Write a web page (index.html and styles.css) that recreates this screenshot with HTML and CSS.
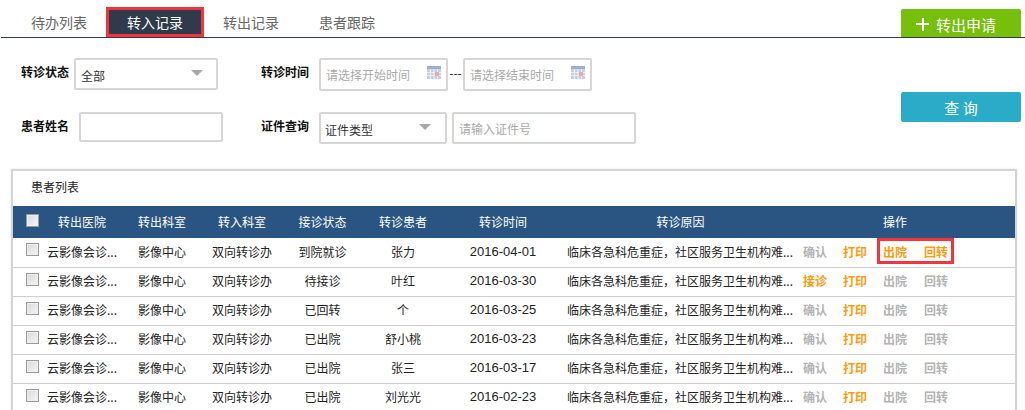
FILE: index.html
```html
<!DOCTYPE html>
<html lang="zh">
<head>
<meta charset="utf-8">
<title>转入记录</title>
<link rel="stylesheet" href="styles.css">
</head>
<body>
<div class="topbar">
  <div class="tabs">
    <a class="tab">待办列表</a>
    <a class="tab active">转入记录</a>
    <a class="tab">转出记录</a>
    <a class="tab">患者跟踪</a>
  </div>
  <button class="btn-add"><span class="plus"></span>转出申请</button>
</div>
<div class="filters">
  <div class="form">
    <div class="row row-one">
      <label class="lbl">转诊状态</label>
      <div class="field sel w-status"><span>全部</span><i class="arrow"></i></div>
      <label class="lbl lbl-two">转诊时间</label>
      <div class="field date"><span class="ph">请选择开始时间</span>
        <svg class="cal" width="14" height="13" viewBox="0 0 14 13"><rect width="14" height="13" fill="#c3d0e8"/><rect width="14" height="3" fill="#9db0cf"/><path d="M0 6.500h14M0 9.500h14M3.500 3v10M7 3v10M10.500 3v10" stroke="#e9eef7" stroke-width="1"/><rect x="8" y="6" width="4" height="4" fill="#eba6a6"/></svg>
      </div>
      <span class="dash">---</span>
      <div class="field date"><span class="ph">请选择结束时间</span>
        <svg class="cal" width="14" height="13" viewBox="0 0 14 13"><rect width="14" height="13" fill="#c3d0e8"/><rect width="14" height="3" fill="#9db0cf"/><path d="M0 6.500h14M0 9.500h14M3.500 3v10M7 3v10M10.500 3v10" stroke="#e9eef7" stroke-width="1"/><rect x="8" y="6" width="4" height="4" fill="#eba6a6"/></svg>
      </div>
    </div>
    <div class="row row-two">
      <label class="lbl">患者姓名</label>
      <div class="field w-name"></div>
      <label class="lbl lbl-two">证件查询</label>
      <div class="field sel w-type"><span>证件类型</span><i class="arrow"></i></div>
      <div class="field w-id"><span class="ph">请输入证件号</span></div>
    </div>
  </div>
  <button class="btn-query">查 询</button>
</div>
<section class="panel">
  <h2 class="panel-title">患者列表</h2>
  <table class="grid">
    <colgroup>
      <col class="c0"><col class="c1"><col class="c2"><col class="c3"><col class="c4"><col class="c5"><col class="c6"><col class="c7"><col class="c8">
    </colgroup>
    <thead>
      <tr><th><input type="checkbox" class="ck"></th><th>转出医院</th><th>转出科室</th><th>转入科室</th><th>接诊状态</th><th>转诊患者</th><th>转诊时间</th><th>转诊原因</th><th class="th-op">操作</th></tr>
    </thead>
    <tbody>
      <tr><td><input type="checkbox" class="ck"></td><td class="hosp">云影像会诊...</td><td>影像中心</td><td>双向转诊办</td><td>到院就诊</td><td>张力</td><td class="day">2016-04-01</td><td class="why">临床各急科危重症，社区服务卫生机构难...</td>
        <td><div class="ops"><a class="off">确认</a><a class="on">打印</a><span class="grp mark"><a class="on">出院</a><a class="on">回转</a></span></div></td></tr>
      <tr><td><input type="checkbox" class="ck"></td><td class="hosp">云影像会诊...</td><td>影像中心</td><td>双向转诊办</td><td>待接诊</td><td>叶红</td><td class="day">2016-03-30</td><td class="why">临床各急科危重症，社区服务卫生机构难...</td>
        <td><div class="ops"><a class="on">接诊</a><a class="on">打印</a><span class="grp"><a class="off">出院</a><a class="off">回转</a></span></div></td></tr>
      <tr><td><input type="checkbox" class="ck"></td><td class="hosp">云影像会诊...</td><td>影像中心</td><td>双向转诊办</td><td>已回转</td><td>个</td><td class="day">2016-03-25</td><td class="why">临床各急科危重症，社区服务卫生机构难...</td>
        <td><div class="ops"><a class="off">确认</a><a class="on">打印</a><span class="grp"><a class="off">出院</a><a class="off">回转</a></span></div></td></tr>
      <tr><td><input type="checkbox" class="ck"></td><td class="hosp">云影像会诊...</td><td>影像中心</td><td>双向转诊办</td><td>已出院</td><td>舒小桃</td><td class="day">2016-03-23</td><td class="why">临床各急科危重症，社区服务卫生机构难...</td>
        <td><div class="ops"><a class="off">确认</a><a class="on">打印</a><span class="grp"><a class="off">出院</a><a class="off">回转</a></span></div></td></tr>
      <tr><td><input type="checkbox" class="ck"></td><td class="hosp">云影像会诊...</td><td>影像中心</td><td>双向转诊办</td><td>已出院</td><td>张三</td><td class="day">2016-03-17</td><td class="why">临床各急科危重症，社区服务卫生机构难...</td>
        <td><div class="ops"><a class="off">确认</a><a class="on">打印</a><span class="grp"><a class="off">出院</a><a class="off">回转</a></span></div></td></tr>
      <tr><td><input type="checkbox" class="ck"></td><td class="hosp">云影像会诊...</td><td>影像中心</td><td>双向转诊办</td><td>已出院</td><td>刘光光</td><td class="day">2016-02-23</td><td class="why">临床各急科危重症，社区服务卫生机构难...</td>
        <td><div class="ops"><a class="off">确认</a><a class="on">打印</a><span class="grp"><a class="off">出院</a><a class="off">回转</a></span></div></td></tr>
    </tbody>
  </table>
</section>
</body>
</html>
```
FILE: styles.css
```css
* { box-sizing: border-box; }
html, body { margin: 0; height: 410px; overflow: hidden; background: #fff; }
body { font-family: "Noto Sans CJK SC", "Liberation Sans", sans-serif; font-size: 12px; color: #222; }

.topbar { height: 38px; border-bottom: 1px solid #333c4a; margin-left: 1px; padding: 0 4px 0 10px; display: flex; justify-content: space-between; align-items: flex-end; }
.tabs { display: flex; }
.tab { width: 96px; height: 30px; line-height: 30px; text-align: center; font-size: 14px; color: #666; }
.tab.active { width: 98px; margin: 0 -1px; height: 30px; line-height: 24px; color: #fff; background: #2f3b4c; border: 3px solid #f5333a; }
.btn-add { width: 120px; height: 28px; border: 0; border-radius: 2px 2px 0 0; background: #76c00c; color: #fff; font: 15px "Noto Sans CJK SC", sans-serif; display: flex; align-items: center; padding: 2px 0 0 15px; }
.plus { width: 13px; height: 13px; margin-right: 7px; background: linear-gradient(#fff, #fff) center / 13px 2px no-repeat, linear-gradient(#fff, #fff) center / 2px 13px no-repeat; }

.filters { display: flex; justify-content: space-between; padding: 20px 4px 0 21px; height: 131px; }
.row { display: flex; align-items: flex-start; }
.row-one { height: 54px; }
.lbl { width: 48px; font-weight: 700; line-height: 28px; color: #111; white-space: nowrap; }
.lbl-two { margin-left: 38px; margin-right: 10px; }
.row-one .lbl-two { margin-left: 43px; }
.row-two .lbl:first-child { margin-right: 10px; }
.row-one .lbl:first-child { margin-right: 5px; }
.field { border: 2px solid #d6d6d6; border-radius: 2px; height: 32px; padding: 0 5px; display: flex; align-items: center; justify-content: space-between; color: #333; background: #fff; }
.ph { color: #a9a9a9; }
.sel span { padding-top: 3px; }
.w-status { width: 144px; padding-right: 13px; }
.date { width: 129px; padding-left: 5px; padding-right: 5px; height: 33px; }
.w-name { width: 144px; height: 30px; }
.w-type { width: 128px; padding-left: 4px; padding-right: 14px; }
.w-type span { padding-top: 2px; }
.w-id { width: 184px; margin-left: 5px; }
.arrow { width: 0; height: 0; border-left: 6px solid transparent; border-right: 6px solid transparent; border-top: 6px solid #a8a8a8; margin-top: -2px; }
.cal { margin-top: -4px; }
.dash { width: 15px; text-align: center; line-height: 30px; color: #111; }
.btn-query { width: 120px; height: 30px; margin-top: 34px; border: 0; border-radius: 2px; background: #2aacc8; color: #fff; font: 15px "Noto Sans CJK SC", sans-serif; }

.panel { margin-left: 11px; width: 1006px; height: 260px; border: 2px solid #d4d4d4; border-bottom: 0; box-shadow: 0 0 2px #e5e5e5; background: #fff; }
.panel-title { margin: 0; height: 35px; line-height: 31px; padding-left: 18px; font-size: 12px; font-weight: 400; color: #222; }
.grid { width: 1002px; border-collapse: collapse; table-layout: fixed; }
.c0 { width: 29px; } .c1 { width: 80px; } .c2 { width: 80px; } .c3 { width: 80px; } .c4 { width: 81px; } .c5 { width: 80px; } .c6 { width: 120px; } .c7 { width: 235px; } .c8 { width: 217px; }
th { height: 32px; background: #2a5583; color: #fff; font-weight: 400; text-align: center; padding: 0 0 1px; }
.th-op { padding-right: 23px; }
td { height: 29px; padding: 0 0 2px; text-align: center; border-bottom: 1px solid #cfcfcf; color: #222; }
td.hosp { white-space: nowrap; }
td.day { font-family: "Liberation Sans", sans-serif; font-size: 13px; }
td.why { text-align: left; padding-left: 4px; white-space: nowrap; }
.ck { appearance: none; width: 13px; height: 13px; margin: 0 0 3px 13px; display: block; border: 1px solid #999; background: linear-gradient(135deg, #d8d8d8, #f6f6f6); box-shadow: inset 0 0 0 1px #eee; }
.ops { display: flex; align-items: center; gap: 16px; padding-left: 5px; font-weight: 700; }
.grp { display: flex; gap: 17px; padding: 0 3px; margin-left: -3px; height: 20px; align-items: center; }
.mark { outline: 3px solid #f5333a; }
.on { color: #ff9a0e; }
.off { color: #b3b3b3; }
```
